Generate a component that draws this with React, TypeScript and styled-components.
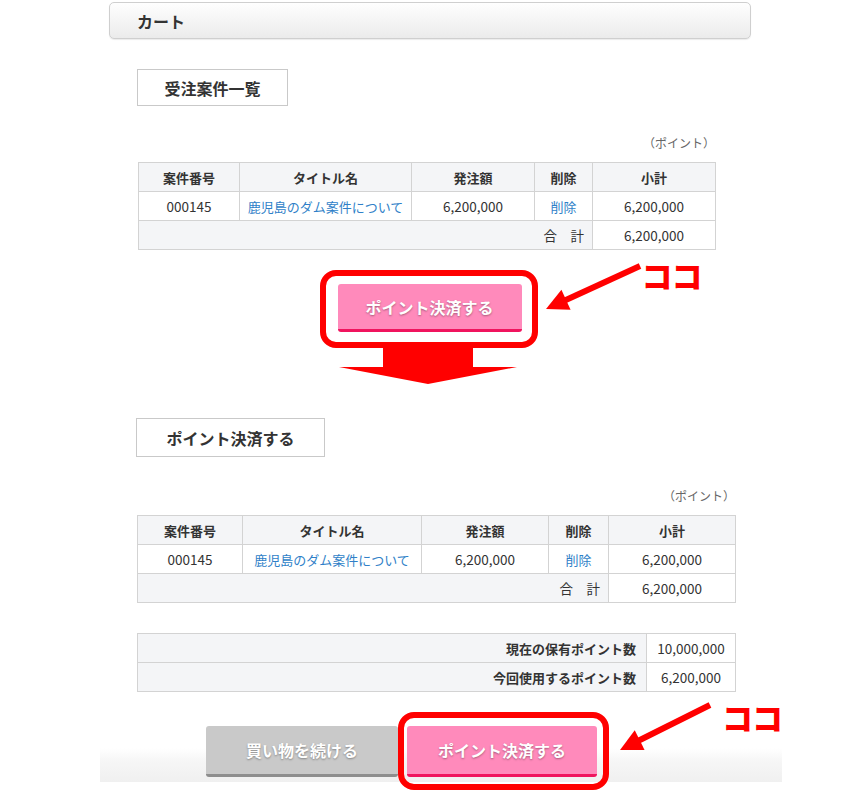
import React from "react";
import styled, { createGlobalStyle } from "styled-components";

const GlobalStyle = createGlobalStyle`
  html, body { margin: 0; padding: 0; background: #fff; }
  body {
    font-family: "Noto Sans CJK JP", "Noto Sans", sans-serif;
    color: #333;
  }
`;

const Page = styled.div`
  width: 859px;
  height: 792px;
  padding-top: 2px;
  box-sizing: border-box;
  overflow: hidden;
`;

const HeaderBar = styled.div`
  margin-left: 109px;
  width: 642px;
  height: 37px;
  box-sizing: border-box;
  border: 1px solid #cfcfcf;
  border-radius: 5px;
  background: linear-gradient(to bottom, #fefefe 0%, #f3f3f3 60%, #ebebeb 100%);
  box-shadow: 0 1px 1px rgba(0, 0, 0, 0.08);
  display: flex;
  align-items: center;
  padding-left: 27px;
  font-size: 16px;
  font-weight: 700;
  color: #333;
`;

const Section = styled.section<{ $left: number; $top: number }>`
  padding-left: ${(p) => p.$left}px;
  margin-top: ${(p) => p.$top}px;
`;

const HeadingBox = styled.div<{ $w: number; $h: number }>`
  width: ${(p) => p.$w}px;
  height: ${(p) => p.$h}px;
  box-sizing: border-box;
  border: 1px solid #c9c9c9;
  background: #fff;
  display: flex;
  align-items: center;
  justify-content: center;
  font-size: 16px;
  font-weight: 700;
  color: #333;
`;

const UnitLabel = styled.div<{ $w: number; $top: number }>`
  width: ${(p) => p.$w}px;
  margin-top: ${(p) => p.$top}px;
  text-align: right;
  font-size: 12px;
  line-height: 16px;
  color: #666;
`;

const Table = styled.table<{ $w: number; $top: number; $shift?: number }>`
  width: ${(p) => p.$w}px;
  margin-top: ${(p) => p.$top}px;
  margin-left: ${(p) => p.$shift ?? 0}px;
  border-collapse: collapse;
  table-layout: fixed;
  font-size: 13.5px;
  color: #333;
  border: 1px solid #cfcfcf;
`;

const Th = styled.th`
  height: 28px;
  padding: 0;
  background: #f4f5f7;
  border: 1px solid #d3d3d3;
  font-size: 13px;
  font-weight: 700;
  text-align: center;
`;

const Td = styled.td<{ $align?: string; $bg?: string; $bold?: boolean; $pr?: number }>`
  height: 28px;
  padding: 0 ${(p) => p.$pr ?? 0}px 0 0;
  border: 1px solid #d3d3d3;
  text-align: ${(p) => p.$align ?? "center"};
  background: ${(p) => p.$bg ?? "#fff"};
  font-weight: ${(p) => (p.$bold ? 700 : 400)};
  font-size: ${(p) => (p.$bold ? "13px" : "inherit")};
  white-space: nowrap;
`;

const Link = styled.a`
  color: #2f7fc8;
  text-decoration: none;
  font-size: 13px;
`;

const ActionArea = styled.div<{ $w: number; $top: number }>`
  width: ${(p) => p.$w}px;
  margin-top: ${(p) => p.$top}px;
  padding-left: 7px;
  box-sizing: border-box;
  display: flex;
  flex-direction: column;
  align-items: center;
`;

const Highlight = styled.div<{ $inset: string }>`
  position: relative;
  display: inline-flex;
  &::before {
    content: "";
    position: absolute;
    inset: ${(p) => p.$inset};
    border: 6px solid #ff0000;
    border-radius: 16px;
    pointer-events: none;
  }
`;

const Button = styled.button<{ $kind: "pink" | "gray"; $w: number; $h: number }>`
  width: ${(p) => p.$w}px;
  height: ${(p) => p.$h}px;
  box-sizing: border-box;
  border: none;
  border-radius: 3px;
  border-bottom: 3px solid ${(p) => (p.$kind === "pink" ? "#f0145e" : "#8e8e8e")};
  background: ${(p) => (p.$kind === "pink" ? "#ff8abb" : "#c9c9c9")};
  color: #fff;
  font-family: "Noto Sans CJK JP", "Noto Sans", sans-serif;
  font-size: 16px;
  font-weight: 700;
  text-shadow: 0 1px 2px rgba(0, 0, 0, 0.35);
  padding: 0;
  cursor: pointer;
`;

const CalloutSvg = styled.svg`
  position: absolute;
  left: 195px;
  top: -30px;
  overflow: visible;
  pointer-events: none;
`;

const Koko = styled.span<{ $left: number; $top: number }>`
  position: absolute;
  left: ${(p) => p.$left}px;
  top: ${(p) => p.$top}px;
  font-size: 31px;
  line-height: 34px;
  font-weight: 900;
  color: #ff0000;
  letter-spacing: -1px;
  white-space: nowrap;
`;

const DownArrow = styled.svg`
  display: block;
  margin-top: 14px;
  margin-left: -3px;
`;

const Footer = styled.div`
  margin-left: 100px;
  margin-top: 20px;
  width: 682px;
  height: 70px;
  box-sizing: border-box;
  padding: 14px 0 0 106px;
  display: flex;
  gap: 9px;
  align-items: flex-start;
  background: linear-gradient(to bottom, #fff 0%, #fff 52%, #f6f6f6 70%, #f0f0f0 100%);
`;

type Pt = [number, number];

function Callout({ tail, tip, koko }: { tail: Pt; tip: Pt; koko: Pt }) {
  const dx = tip[0] - tail[0];
  const dy = tip[1] - tail[1];
  const len = Math.hypot(dx, dy);
  const ux = dx / len;
  const uy = dy / len;
  const headLen = 22;
  const half = 11;
  const bx = tip[0] - ux * headLen;
  const by = tip[1] - uy * headLen;
  const nx = -uy;
  const ny = ux;
  const p1 = `${bx + nx * half},${by + ny * half}`;
  const p2 = `${bx - nx * half},${by - ny * half}`;
  return (
    <>
      <CalloutSvg width="110" height="70" viewBox="0 0 110 70">
        <line
          x1={tail[0]}
          y1={tail[1]}
          x2={bx + ux * 2}
          y2={by + uy * 2}
          stroke="#ff0000"
          strokeWidth="6"
        />
        <polygon points={`${tip[0]},${tip[1]} ${p1} ${p2}`} fill="#ff0000" />
      </CalloutSvg>
      <Koko $left={koko[0]} $top={koko[1]}>ココ</Koko>
    </>
  );
}

function OrderTable({
  w,
  top,
  shift,
  cols,
}: {
  w: number;
  top: number;
  shift?: number;
  cols: number[];
}) {
  return (
    <Table $w={w} $top={top} $shift={shift}>
      <colgroup>
        {cols.map((c, i) => (
          <col key={i} style={{ width: c }} />
        ))}
      </colgroup>
      <thead>
        <tr>
          <Th>案件番号</Th>
          <Th>タイトル名</Th>
          <Th>発注額</Th>
          <Th>削除</Th>
          <Th>小計</Th>
        </tr>
      </thead>
      <tbody>
        <tr>
          <Td>000145</Td>
          <Td>
            <Link href="#">鹿児島のダム案件について</Link>
          </Td>
          <Td>6,200,000</Td>
          <Td>
            <Link href="#">削除</Link>
          </Td>
          <Td>6,200,000</Td>
        </tr>
        <tr>
          <Td colSpan={4} $align="right" $bg="#f4f5f7" $pr={8}>
            合　計
          </Td>
          <Td>6,200,000</Td>
        </tr>
      </tbody>
    </Table>
  );
}

export default function App() {
  return (
    <Page>
      <GlobalStyle />
      <HeaderBar>カート</HeaderBar>

      <Section $left={137} $top={30}>
        <HeadingBox $w={151} $h={37}>受注案件一覧</HeadingBox>
        <UnitLabel $w={578} $top={29}>（ポイント）</UnitLabel>
        <OrderTable w={577} top={11} shift={1} cols={[101, 172, 123, 58, 123]} />
        <ActionArea $w={578} $top={34}>
          <Highlight $inset="-14px -16px -16px -18px">
            <Button $kind="pink" $w={184} $h={48}>
              ポイント決済する
            </Button>
            <Callout tail={[107, 12]} tip={[13, 55]} koko={[304, -26]} />
          </Highlight>
          <DownArrow width="178" height="38" viewBox="0 0 178 38">
            <rect x="44" y="0" width="90" height="22" fill="#ff0000" />
            <polygon points="0,21 178,21 89,38" fill="#ff0000" />
          </DownArrow>
        </ActionArea>
      </Section>

      <Section $left={136} $top={34}>
        <HeadingBox $w={189} $h={39}>ポイント決済する</HeadingBox>
        <UnitLabel $w={599} $top={31}>（ポイント）</UnitLabel>
        <OrderTable w={598} top={11} shift={1} cols={[105, 179, 127, 60, 127]} />
        <Table $w={598} $top={30} $shift={1}>
          <colgroup>
            <col style={{ width: 509 }} />
            <col style={{ width: 89 }} />
          </colgroup>
          <tbody>
            <tr>
              <Td $align="right" $bg="#f4f5f7" $bold $pr={10}>
                現在の保有ポイント数
              </Td>
              <Td>10,000,000</Td>
            </tr>
            <tr>
              <Td $align="right" $bg="#f4f5f7" $bold $pr={10}>
                今回使用するポイント数
              </Td>
              <Td>6,200,000</Td>
            </tr>
          </tbody>
        </Table>
      </Section>

      <Footer>
        <Button $kind="gray" $w={192} $h={51}>
          買い物を続ける
        </Button>
        <Highlight $inset="-14px -12px -13px -9px">
          <Button $kind="pink" $w={190} $h={51}>
            ポイント決済する
          </Button>
          <Callout tail={[108, 9]} tip={[18, 54]} koko={[315, -26]} />
        </Highlight>
      </Footer>
    </Page>
  );
}
